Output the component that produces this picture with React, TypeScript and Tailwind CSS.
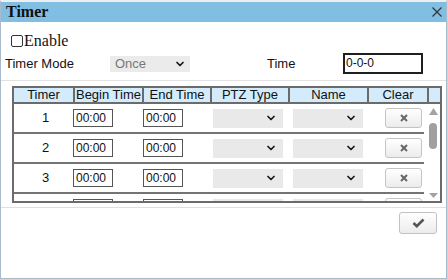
import { ChevronDown } from 'lucide-react';

const rows = [1, 2, 3, 4];

function Chevron() {
  return <ChevronDown size={12} strokeWidth={3.5} className="text-[#1a1a1a]" />;
}

function GraySelect({ width, label }: { width: string; label?: string }) {
  return (
    <div className={`${width} h-[19px] bg-[#e9e9e9] flex items-center justify-between pl-[5px] pr-[6px] text-[13px] text-[#777]`}>
      <span>{label}</span>
      <Chevron />
    </div>
  );
}

function TimeBox() {
  return (
    <div className="w-[40px] h-[18px] border border-[#555] bg-white text-[12px] leading-[16px] pl-[2px] text-[#111]">
      00:00
    </div>
  );
}

function ClearButton() {
  return (
    <button className="w-[37px] h-[20px] border border-[#c4c4c4] rounded-[3px] bg-gradient-to-b from-white to-[#ececec] flex items-center justify-center">
      <svg width="8" height="8" viewBox="0 0 8 8">
        <path d="M1 1L7 7M7 1L1 7" stroke="#666" strokeWidth="2" />
      </svg>
    </button>
  );
}

export default function App() {
  return (
    <div className="w-[447px] h-[279px] bg-white border-x border-b border-[#a9bacb] border-t-2 border-t-[#eceef1] flex flex-col overflow-hidden font-['Liberation_Sans',Arial,sans-serif] text-[#111]">
      <div className="h-[20px] shrink-0 bg-[#80bfe2] flex items-center justify-between pl-[5px] pr-[4px]">
        <span className="font-['Liberation_Serif','Times_New_Roman',serif] font-bold text-[16px] leading-none">Timer</span>
        <svg width="10" height="10" viewBox="0 0 10 10">
          <path d="M0.5 0.5L9.5 9.5M9.5 0.5L0.5 9.5" stroke="#333" strokeWidth="1.2" />
        </svg>
      </div>

      <div className="mt-[9px] h-[19px] pl-[10px] flex items-center font-['Liberation_Serif','Times_New_Roman',serif] text-[16px]">
        <div className="w-[12px] h-[12px] border border-[#333] rounded-[2px] bg-white" />
        <span className="ml-[1px]">Enable</span>
      </div>

      <div className="mt-[3px] h-[21px] pl-[4px] flex items-center text-[13px]">
        <span className="w-[105px]">Timer Mode</span>
        <div className="w-[80px] h-[16px] bg-[#ebebeb] flex items-center justify-between pl-[5px] pr-[4px] text-[#777]">
          <span>Once</span>
          <Chevron />
        </div>
        <span className="ml-[77px] w-[76px]">Time</span>
        <div className="w-[80px] h-[21px] border-2 border-[#1f1f1f] text-[12px] leading-[17px] pl-[1px]">0-0-0</div>
      </div>

      <div className="mt-[6px] border-t border-[#e2e2e2]" />

      <div className="mt-[5px] ml-[11px] w-[430px] border-2 border-[#6b6b6b] text-[13px]">
        <div className="h-[14px] flex bg-[#d3ebfb] leading-[14px] text-center">
          <div className="w-[61px] border-r-2 border-[#6b6b6b]">Timer</div>
          <div className="w-[69px] border-r-2 border-[#6b6b6b]">Begin Time</div>
          <div className="w-[68px] border-r-2 border-[#6b6b6b]">End Time</div>
          <div className="w-[78px] border-r-2 border-[#6b6b6b]">PTZ Type</div>
          <div className="w-[79px] border-r-2 border-[#6b6b6b]">Name</div>
          <div className="w-[60px] border-r-2 border-[#6b6b6b]">Clear</div>
        </div>
        <div className="h-[99px] flex border-t-2 border-[#6b6b6b] overflow-hidden">
          <div className="w-[410px] flex flex-col">
            {rows.map((n) => (
              <div key={n} className="h-[30px] shrink-0 flex items-center border-b-2 border-[#747474]">
                <span className="w-[59px] pl-[4px] text-center">{n}</span>
                <TimeBox />
                <div className="ml-[30px]">
                  <TimeBox />
                </div>
                <div className="ml-[30px]">
                  <GraySelect width="w-[70px]" />
                </div>
                <div className="ml-[10px]">
                  <GraySelect width="w-[70px]" />
                </div>
                <div className="ml-[22px]">
                  <ClearButton />
                </div>
              </div>
            ))}
          </div>
          <div className="ml-[2px] w-[14px] flex flex-col items-center pt-[4px] pb-[3px]">
            <svg width="9" height="7" viewBox="0 0 9 7">
              <path d="M4.5 0L9 7H0Z" fill="#a3a3a3" />
            </svg>
            <div className="mt-[8px] w-[8px] h-[26px] rounded-full bg-[#a0a0a0]" />
            <div className="flex-1" />
            <svg width="9" height="5" viewBox="0 0 9 5">
              <path d="M0 0H9L4.5 5Z" fill="#a3a3a3" />
            </svg>
          </div>
        </div>
      </div>

      <div className="mt-[4px] border-t border-[#dde1e7]" />

      <div className="mt-[4px] flex justify-end pr-[9px]">
        <button className="w-[38px] h-[22px] border border-[#c2c2c2] rounded-[3px] bg-gradient-to-b from-white to-[#ececec] flex items-center justify-center">
          <svg width="13" height="10" viewBox="0 0 13 10">
            <path d="M1.5 5L4.8 8.2L11.5 1.5" fill="none" stroke="#555" strokeWidth="2.6" />
          </svg>
        </button>
      </div>
    </div>
  );
}
